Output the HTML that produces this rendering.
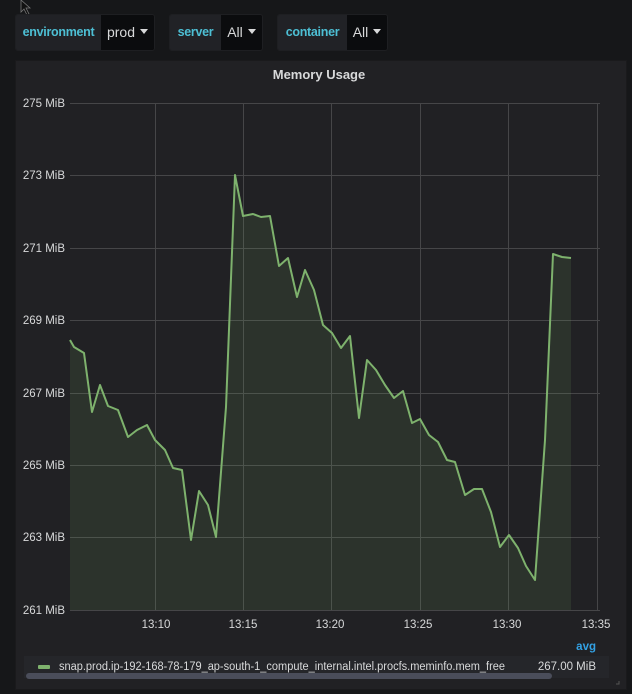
<!DOCTYPE html>
<html><head><style>
body{margin:0;width:632px;height:694px;background:#161719;font-family:"Liberation Sans",sans-serif;overflow:hidden;position:relative}
.var{position:absolute;top:14px;height:35px;display:flex;border:1px solid #1e1f22;border-radius:3px;overflow:hidden;font-size:12.5px}
.lbl{background:#212226;color:#4dbfd4;font-weight:bold;line-height:34px;text-align:center;letter-spacing:-0.3px}
.val{background:#0b0c0e;color:#d8d9da;line-height:34px;text-align:center;font-size:14px}
.val:after{content:"";display:inline-block;margin-left:5px;border-left:4px solid transparent;border-right:4px solid transparent;border-top:5px solid #d8d9da;vertical-align:3px}
.panel{position:absolute;left:15px;top:60px;width:610px;height:628px;background:#212124;border:1px solid #1a1a1c}
</style></head><body>
<svg style="position:absolute;left:20px;top:0" width="16" height="16"><path d="M1 0 L1 12 L4 9 L7 15 L9 14 L6 8 L10 8 Z" fill="#111" stroke="#777" stroke-width="0.8"/></svg>
<div class="var" style="left:15px"><span class="lbl" style="width:85px">environment</span><span class="val" style="width:53px">prod</span></div>
<div class="var" style="left:169px"><span class="lbl" style="width:51px">server</span><span class="val" style="width:41px">All</span></div>
<div class="var" style="left:277px"><span class="lbl" style="width:69px">container</span><span class="val" style="width:40px">All</span></div>
<div class="panel"></div>
<svg style="position:absolute;left:0;top:0" width="632" height="694" font-family="Liberation Sans, sans-serif">
<text x="319" y="79" fill="#d8d9da" font-size="13" font-weight="bold" text-anchor="middle">Memory Usage</text>
<g stroke="#464648" stroke-width="1">
<line x1="70" y1="103.5" x2="600" y2="103.5"/><line x1="70" y1="175.5" x2="600" y2="175.5"/><line x1="70" y1="248.5" x2="600" y2="248.5"/><line x1="70" y1="320.5" x2="600" y2="320.5"/><line x1="70" y1="393.5" x2="600" y2="393.5"/><line x1="70" y1="465.5" x2="600" y2="465.5"/><line x1="70" y1="537.5" x2="600" y2="537.5"/><line x1="70" y1="610.5" x2="600" y2="610.5"/>
<line x1="155.5" y1="103" x2="155.5" y2="610"/><line x1="243.5" y1="103" x2="243.5" y2="610"/><line x1="331.5" y1="103" x2="331.5" y2="610"/><line x1="420.5" y1="103" x2="420.5" y2="610"/><line x1="508.5" y1="103" x2="508.5" y2="610"/><line x1="597.5" y1="103" x2="597.5" y2="610"/>
</g>
<g fill="#d8d9da" font-size="11.5" text-anchor="end">
<text x="65" y="107">275 MiB</text><text x="65" y="179">273 MiB</text><text x="65" y="252">271 MiB</text><text x="65" y="324">269 MiB</text><text x="65" y="397">267 MiB</text><text x="65" y="469">265 MiB</text><text x="65" y="541">263 MiB</text><text x="65" y="614">261 MiB</text>
</g>
<g fill="#d8d9da" font-size="11.5" text-anchor="middle">
<text x="156" y="628">13:10</text><text x="243" y="628">13:15</text><text x="330" y="628">13:20</text><text x="418" y="628">13:25</text><text x="507" y="628">13:30</text><text x="596" y="628">13:35</text>
</g>
<path fill="rgba(126,178,109,0.12)" d="M70,340 L74,347 L84,353 L92,412 L100,385 L108,406 L118,410 L128,437 L137,430 L147,425 L155,440 L165,450 L173,468 L182,470 L191,540 L199,491 L208,505 L216,537 L226,407 L235,175 L243,216 L253,214 L261,217 L270,216 L279,266 L288,258 L297,297 L305,270 L314,290 L323,325 L332,333 L341,348 L350,336 L359,418 L367,360 L376,370 L385,385 L394,398 L403,391 L412,423 L420,419 L429,435 L438,442 L447,460 L455,462 L465,495 L474,489 L482,489 L491,512 L500,547 L509,535 L518,548 L526,566 L535,580 L545,440 L553,254 L562,257 L571,258 L571,610 L70,610 Z"/>
<path fill="none" stroke="#7eb26d" stroke-width="2" stroke-linejoin="round" d="M70,340 L74,347 L84,353 L92,412 L100,385 L108,406 L118,410 L128,437 L137,430 L147,425 L155,440 L165,450 L173,468 L182,470 L191,540 L199,491 L208,505 L216,537 L226,407 L235,175 L243,216 L253,214 L261,217 L270,216 L279,266 L288,258 L297,297 L305,270 L314,290 L323,325 L332,333 L341,348 L350,336 L359,418 L367,360 L376,370 L385,385 L394,398 L403,391 L412,423 L420,419 L429,435 L438,442 L447,460 L455,462 L465,495 L474,489 L482,489 L491,512 L500,547 L509,535 L518,548 L526,566 L535,580 L545,440 L553,254 L562,257 L571,258"/>
<text x="596" y="650" fill="#33a2e5" font-size="11.5" font-weight="bold" text-anchor="end">avg</text>
<rect x="24" y="656" width="585" height="22" fill="#25262a"/>
<rect x="38" y="665" width="12" height="4" rx="1" fill="#7eb26d"/>
<text x="59" y="670" fill="#d8d9da" font-size="11.5" textLength="446" lengthAdjust="spacingAndGlyphs">snap.prod.ip-192-168-78-179_ap-south-1_compute_internal.intel.procfs.meminfo.mem_free</text>
<text x="596" y="670" fill="#d8d9da" font-size="11.5" text-anchor="end">267.00 MiB</text>
<rect x="26" y="673" width="526" height="6" rx="3" fill="#4a4d5a"/>
<path d="M616 684 L619 684 L619 681" stroke="#555" fill="none"/>
</svg>
</body></html>
